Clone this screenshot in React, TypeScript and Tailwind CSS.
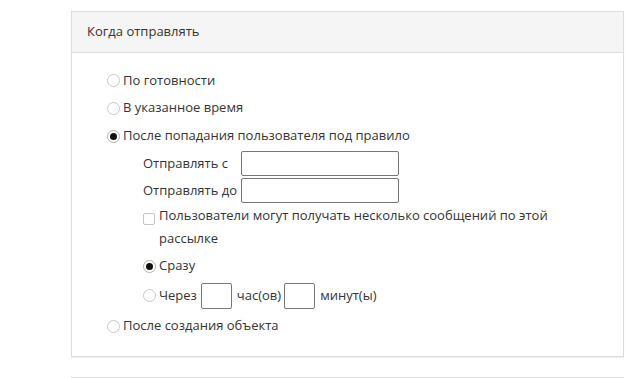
import React from "react";

function Radio({ checked = false }: { checked?: boolean }) {
  return (
    <span
      className={
        "inline-flex items-center justify-center w-[13px] h-[13px] rounded-full border bg-white shrink-0 " +
        (checked ? "border-[#b9b2a6]" : "border-[#c8c8c8]")
      }
    >
      {checked && <span className="block w-[7px] h-[7px] rounded-full bg-[#111]" />}
    </span>
  );
}

function Checkbox() {
  return <span className="inline-block w-[12px] h-[12px] border border-[#c4c4c4] rounded-[2px] bg-white shrink-0" />;
}

export default function App() {
  return (
    <div className="w-[627px] h-[378px] bg-white overflow-hidden pt-[11px] pl-[71px] pr-[3px] text-[13px] text-[#333]" style={{ fontFamily: '"Open Sans", "Liberation Sans", sans-serif' }}>
      {/* Panel */}
      <div className="border border-[#dcdcdc] shadow-[0_1px_1px_rgba(0,0,0,0.06)]">
        <div className="h-[41px] bg-[#f5f5f5] border-b border-[#dcdcdc] flex items-center pl-[15px]">
          Когда отправлять
        </div>

        <div className="pl-[35px] pt-[14px] pb-[13px]">
          <div className="h-[27px] flex items-center gap-[3px]">
            <Radio />
            <span>По готовности</span>
          </div>
          <div className="h-[28px] flex items-center gap-[3px]">
            <Radio />
            <span>В указанное время</span>
          </div>
          <div className="h-[28px] flex items-center gap-[3px]">
            <Radio checked />
            <span>После попадания пользователя под правило</span>
          </div>

          {/* nested options */}
          <div className="pl-[36px]">
            <div className="h-[27px] flex items-center">
              <span className="w-[98px]">Отправлять с</span>
              <input className="w-[158px] h-[25px] border border-[#767676] rounded-[2px] outline-none" />
            </div>
            <div className="h-[27px] flex items-center">
              <span className="w-[98px]">Отправлять до</span>
              <input className="w-[158px] h-[25px] border border-[#767676] rounded-[2px] outline-none" />
            </div>
            <div className="flex gap-[4px] leading-[23px] w-[420px]">
              <span className="pt-[5px]">
                <Checkbox />
              </span>
              <span>Пользователи могут получать несколько сообщений по этой рассылке</span>
            </div>
            <div className="h-[32px] flex items-center gap-[3px]">
              <Radio checked />
              <span>Сразу</span>
            </div>
            <div className="h-[27px] flex items-center">
              <Radio />
              <span className="ml-[3px]">Через</span>
              <input className="ml-[4px] w-[31px] h-[26px] border border-[#767676] rounded-[2px] outline-none" />
              <span className="ml-[5px]">час(ов)</span>
              <input className="ml-[3px] w-[31px] h-[26px] border border-[#767676] rounded-[2px] outline-none" />
              <span className="ml-[5px]">минут(ы)</span>
            </div>
          </div>

          <div className="h-[34px] flex items-center gap-[3px]">
            <Radio />
            <span>После создания объекта</span>
          </div>
        </div>
      </div>

      {/* next panel top edge */}
      <div className="mt-[20px] border-t border-[#dcdcdc] h-[10px]" />
    </div>
  );
}
